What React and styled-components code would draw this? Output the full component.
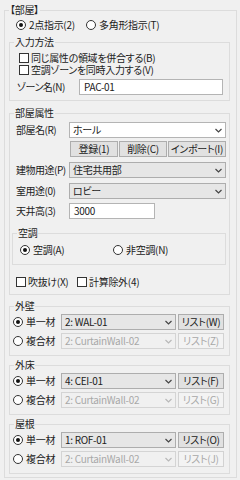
import React from "react";
import styled, { createGlobalStyle } from "styled-components";

const GlobalStyle = createGlobalStyle`
  html, body {
    margin: 0;
    padding: 0;
    background: #f0f0f0;
  }
  body {
    font-family: "Noto Sans CJK JP", "Noto Sans", sans-serif;
    font-size: 10px;
    font-feature-settings: "palt";
    letter-spacing: -0.3px;
    color: #222;
  }
  * {
    box-sizing: border-box;
  }
`;

const Panel = styled.div`
  width: 240px;
  height: 480px;
  padding: 4px 0 0 4px;
  background: #f0f0f0;
  overflow: hidden;
`;

const Group = styled.fieldset`
  margin: ${({ $mt }) => $mt || 0}px 0 0 0;
  padding: ${({ $pad }) => $pad};
  width: ${({ $w }) => ($w ? `${$w}px` : "auto")};
  min-width: 0;
  border: 1px solid #dcdcdc;
  display: flex;
  flex-direction: column;
`;

const Legend = styled.legend`
  margin-left: ${({ $x }) => $x}px;
  padding: 0 1px;
  height: 12px;
  line-height: 12px;
  white-space: nowrap;
`;

const OptionRow = styled.div`
  display: flex;
  align-items: center;
  height: ${({ $h }) => $h || 12}px;
  margin: ${({ $mt }) => $mt || 0}px 0 0 ${({ $ml }) => $ml || 0}px;
`;

const Option = styled.label`
  display: flex;
  align-items: center;
  gap: ${({ $gap }) => ($gap === undefined ? 3 : $gap)}px;
  width: ${({ $w }) => ($w ? `${$w}px` : "auto")};
  flex: none;
  white-space: nowrap;
  line-height: 12px;
`;

const Radio = styled.span`
  width: 10px;
  height: 10px;
  flex: none;
  border: 1px solid #333;
  border-radius: 50%;
  background: #fff;
  display: flex;
  align-items: center;
  justify-content: center;

  &::after {
    content: "";
    width: 4px;
    height: 4px;
    border-radius: 50%;
    background: ${({ $on }) => ($on ? "#111" : "transparent")};
  }
`;

const Check = styled.span`
  width: 10px;
  height: 10px;
  flex: none;
  border: 1px solid #333;
  background: #fff;
`;

const FieldRow = styled.div`
  display: flex;
  align-items: center;
  height: 16px;
  margin-top: ${({ $mt }) => $mt || 0}px;
  padding-left: ${({ $pl }) => $pl || 0}px;
  justify-content: ${({ $end }) => ($end ? "flex-end" : "flex-start")};
  gap: ${({ $gap }) => $gap || 0}px;
`;

const FieldLabel = styled.span`
  width: ${({ $w }) => $w}px;
  flex: none;
  white-space: nowrap;
  letter-spacing: -0.5px;
  line-height: 14px;
`;

const TextBox = styled.div`
  width: ${({ $w }) => $w}px;
  height: 16px;
  flex: none;
  padding: 0 4px;
  border: 1px solid #b4b4b4;
  background: #fff;
  line-height: 14px;
  white-space: nowrap;
`;

const comboColors = {
  edit: { bg: "#fff", border: "#b4b4b4", text: "#222", arrow: "#444" },
  list: { bg: "#e6e6e6", border: "#adadad", text: "#222", arrow: "#444" },
  off: { bg: "#f0f0f0", border: "#d4d4d4", text: "#a8a8a8", arrow: "#b8b8b8" },
};

const ComboBox = styled.div`
  width: ${({ $w }) => ($w ? `${$w}px` : "auto")};
  flex: ${({ $w }) => ($w ? "none" : 1)};
  height: 16px;
  padding: 0 3px 0 3px;
  display: flex;
  align-items: center;
  justify-content: space-between;
  border: 1px solid ${({ $kind }) => comboColors[$kind].border};
  background: ${({ $kind }) => comboColors[$kind].bg};
  color: ${({ $kind }) => comboColors[$kind].text};
  line-height: 14px;
  white-space: nowrap;
`;

const Button = styled.button`
  width: ${({ $w }) => $w}px;
  height: 16px;
  flex: none;
  margin-left: ${({ $ml }) => $ml || 0}px;
  padding: 0;
  font: inherit;
  letter-spacing: inherit;
  line-height: 14px;
  white-space: nowrap;
  border: 1px solid ${({ disabled }) => (disabled ? "#d2d2d2" : "#adadad")};
  background: ${({ disabled }) => (disabled ? "#f3f3f3" : "#e1e1e1")};
  color: ${({ disabled }) => (disabled ? "#a8a8a8" : "#222")};
`;

function Chevron({ color }) {
  return (
    <svg width="7" height="5" viewBox="0 0 7 5">
      <polyline points="0.5,1 3.5,4 6.5,1" fill="none" stroke={color} strokeWidth="1.2" />
    </svg>
  );
}

function Combo({ kind = "list", w, children }) {
  return (
    <ComboBox $kind={kind} $w={w}>
      <span>{children}</span>
      <Chevron color={comboColors[kind].arrow} />
    </ComboBox>
  );
}

function MaterialGroup({ title, mt, single, singleKey, compositeKey }) {
  return (
    <Group $mt={mt} $pad="2px 4px 6px 3px">
      <Legend $x={1}>{title}</Legend>
      <FieldRow>
        <Option $w={48}><Radio $on />単一材</Option>
        <Combo w={115}>{single}</Combo>
        <Button $w={46} $ml={2}>リスト({singleKey})</Button>
      </FieldRow>
      <FieldRow $mt={3}>
        <Option $w={48}><Radio />複合材</Option>
        <Combo w={115} kind="off">2: CurtainWall-02</Combo>
        <Button $w={46} $ml={2} disabled>リスト({compositeKey})</Button>
      </FieldRow>
    </Group>
  );
}

export default function App() {
  return (
    <>
      <GlobalStyle />
      <Panel>
        <Group $w={233} $pad="2px 6px 3px 4px">
          <Legend $x={0}>【部屋】</Legend>
          <OptionRow $ml={7} $h={14}>
            <Option $w={70}><Radio $on />2点指示(2)</Option>
            <Option><Radio />多角形指示(T)</Option>
          </OptionRow>

          <Group $mt={4} $pad="4px 6px 5px 0">
            <Legend $x={4}>入力方法</Legend>
            <OptionRow $ml={9}>
              <Option $gap={2}><Check />同じ属性の領域を併合する(B)</Option>
            </OptionRow>
            <OptionRow $ml={9}>
              <Option $gap={2}><Check />空調ゾーンを同時入力する(V)</Option>
            </OptionRow>
            <FieldRow $mt={3} $pl={7}>
              <FieldLabel $w={62}>ゾーン名(N)</FieldLabel>
              <TextBox $w={144}>PAC-01</TextBox>
            </FieldRow>
          </Group>

          <Group $mt={6} $pad="3px 3px 6px 2px">
            <Legend $x={2}>部屋属性</Legend>
            <FieldRow $pl={4}>
              <FieldLabel $w={53}>部屋名(R)</FieldLabel>
              <Combo kind="edit">ホール</Combo>
            </FieldRow>
            <FieldRow $mt={3} $end $gap={1}>
              <Button $w={48}>登録(1)</Button>
              <Button $w={48}>削除(C)</Button>
              <Button $w={58}>インポート(I)</Button>
            </FieldRow>
            <FieldRow $mt={5} $pl={4}>
              <FieldLabel $w={53}>建物用途(P)</FieldLabel>
              <Combo>住宅共用部</Combo>
            </FieldRow>
            <FieldRow $mt={5} $pl={4}>
              <FieldLabel $w={53}>室用途(0)</FieldLabel>
              <Combo>ロビー</Combo>
            </FieldRow>
            <FieldRow $mt={4} $pl={4}>
              <FieldLabel $w={53}>天井高(3)</FieldLabel>
              <TextBox $w={86}>3000</TextBox>
            </FieldRow>

            <Group $mt={8} $pad="5px 0 8px 0">
              <Legend $x={4}>空調</Legend>
              <OptionRow $ml={7}>
                <Option $w={93}><Radio $on />空調(A)</Option>
                <Option><Radio />非空調(N)</Option>
              </OptionRow>
            </Group>

            <OptionRow $mt={11} $ml={4}>
              <Option $w={61} $gap={2}><Check />吹抜け(X)</Option>
              <Option $gap={2}><Check />計算除外(4)</Option>
            </OptionRow>
          </Group>

          <MaterialGroup title="外壁" mt={5} single="2: WAL-01" singleKey="W" compositeKey="Z" />
          <MaterialGroup title="外床" mt={3} single="4: CEI-01" singleKey="F" compositeKey="G" />
          <MaterialGroup title="屋根" mt={3} single="1: ROF-01" singleKey="O" compositeKey="J" />
        </Group>
      </Panel>
    </>
  );
}
